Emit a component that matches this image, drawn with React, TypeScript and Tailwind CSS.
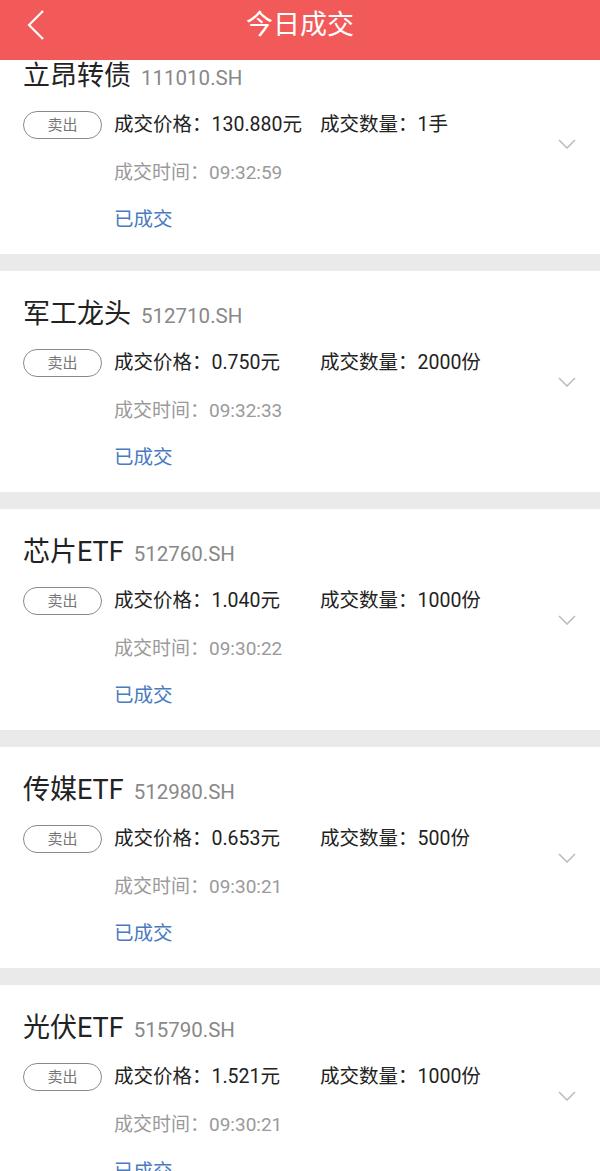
import React from 'react';

interface Trade {
  name: string;
  code: string;
  price: string;
  qty: string;
  time: string;
}

const trades: Trade[] = [
  { name: '立昂转债', code: '111010.SH', price: '130.880元', qty: '1手', time: '09:32:59' },
  { name: '军工龙头', code: '512710.SH', price: '0.750元', qty: '2000份', time: '09:32:33' },
  { name: '芯片ETF', code: '512760.SH', price: '1.040元', qty: '1000份', time: '09:30:22' },
  { name: '传媒ETF', code: '512980.SH', price: '0.653元', qty: '500份', time: '09:30:21' },
  { name: '光伏ETF', code: '515790.SH', price: '1.521元', qty: '1000份', time: '09:30:21' },
];

const font = { fontFamily: 'Roboto, "Noto Sans CJK SC", sans-serif' };

const TradeCard: React.FC<{ t: Trade }> = ({ t }) => (
  <div className="bg-white h-[221px] flex items-center pl-[23px] pr-[24px]">
    <div className="flex-1 h-full pt-[23px]">
      {/* name + code */}
      <div className="h-[40px] flex items-baseline leading-[40px]">
        <span className="text-[27px] text-[#222]">{t.name}</span>
        <span className="text-[20.5px] text-[#888] ml-[10px]">{t.code}</span>
      </div>

      {/* direction + price + qty */}
      <div className="h-[40px] mt-[9px] flex items-center">
        <div className="w-[79px] h-[28px] rounded-full border border-[#8a8a8a] flex items-center justify-center text-[15px] text-[#777] shrink-0">
          卖出
        </div>
        <div className="ml-[12px] flex items-center text-[19.5px] text-[#222]">
          <span className="w-[206px] shrink-0">成交价格：{t.price}</span>
          <span>成交数量：{t.qty}</span>
        </div>
      </div>

      <div className="h-[40px] mt-[8px] pl-[91px] flex items-center text-[19px] text-[#9a9a9a]">
        成交时间：{t.time}
      </div>

      <div className="h-[40px] mt-[7px] pl-[91px] flex items-center text-[19.5px] text-[#4a7bbf]">
        已成交
      </div>
    </div>

    <svg width="18" height="10" viewBox="0 0 18 10" className="shrink-0">
      <polyline points="1,1 9,9 17,1" fill="none" stroke="#bdbdbd" strokeWidth="1.6" />
    </svg>
  </div>
);

export default function App() {
  return (
    <div className="h-[1171px] w-[600px] overflow-hidden flex flex-col bg-[#eaeaea]" style={font}>
      <div className="h-[60px] shrink-0 bg-[#f25a5a] relative z-10">
        <div className="h-[51px] flex items-center justify-center relative">
          <svg width="18" height="30" viewBox="0 0 18 30" className="absolute left-[27px] top-[10px]">
            <polyline points="16,1 2,15 16,29" fill="none" stroke="#fff" strokeWidth="2.2" />
          </svg>
          <span className="text-white text-[27px]">今日成交</span>
        </div>
      </div>

      <div className="flex-1 overflow-hidden">
        <div className="-mt-[27px] flex flex-col gap-[17px]">
          {trades.map((t) => (
            <TradeCard key={t.code} t={t} />
          ))}
        </div>
      </div>
    </div>
  );
}
